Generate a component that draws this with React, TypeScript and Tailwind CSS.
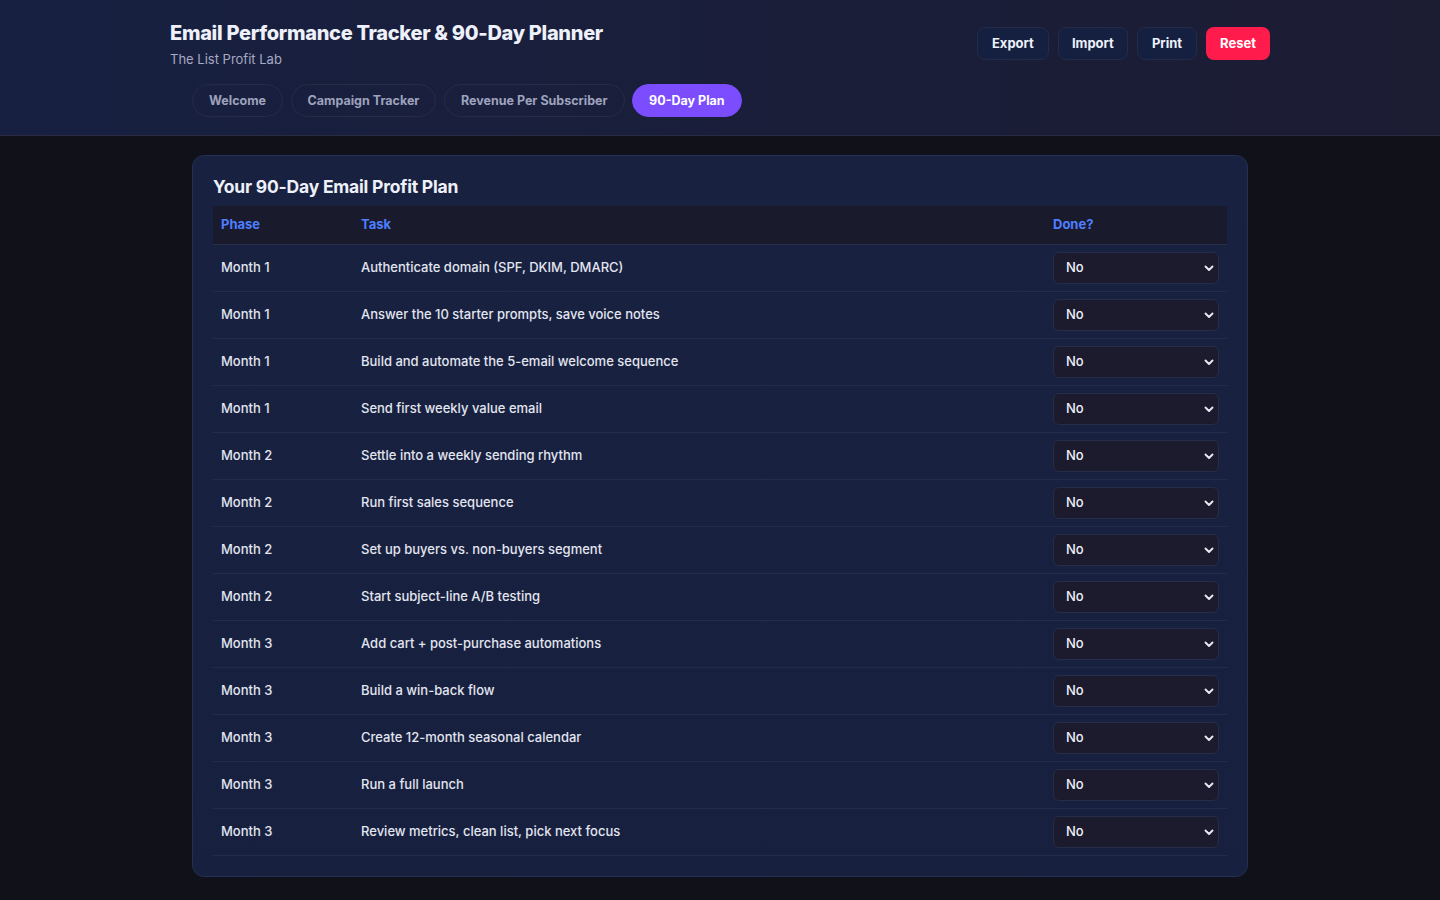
import { useState } from "react";

const tabs = ["Welcome", "Campaign Tracker", "Revenue Per Subscriber", "90-Day Plan"];

const plan = [
    { phase: "Month 1", task: "Authenticate domain (SPF, DKIM, DMARC)" },
    { phase: "Month 1", task: "Answer the 10 starter prompts, save voice notes" },
    { phase: "Month 1", task: "Build and automate the 5-email welcome sequence" },
    { phase: "Month 1", task: "Send first weekly value email" },
    { phase: "Month 2", task: "Settle into a weekly sending rhythm" },
    { phase: "Month 2", task: "Run first sales sequence" },
    { phase: "Month 2", task: "Set up buyers vs. non-buyers segment" },
    { phase: "Month 2", task: "Start subject-line A/B testing" },
    { phase: "Month 3", task: "Add cart + post-purchase automations" },
    { phase: "Month 3", task: "Build a win-back flow" },
    { phase: "Month 3", task: "Create 12-month seasonal calendar" },
    { phase: "Month 3", task: "Run a full launch" },
    { phase: "Month 3", task: "Review metrics, clean list, pick next focus" },
];

function Chevron() {
    return (
        <svg className="pointer-events-none absolute right-[5px] top-1/2 -translate-y-1/2" width="10" height="10" viewBox="0 0 10 10" fill="none">
            <path d="M1.5 3.5 L5 7 L8.5 3.5" stroke="#e8e9f3" strokeWidth="1.9" strokeLinecap="round" strokeLinejoin="round" />
        </svg>
    );
}

export default function App() {
    const [active, setActive] = useState("90-Day Plan");
    const [done, setDone] = useState<string[]>(plan.map(() => "No"));

    return (
        <div className="min-h-screen bg-[#111119] text-[#e3e5f0]" style={{ fontFamily: "Inter, 'Noto Sans', sans-serif" }}>
            {/* Header */}
            <header className="border-b border-[#2a2b42] bg-gradient-to-r from-[#172041] to-[#1c1c33] pb-[18px] pt-[19px]">
                <div className="mx-auto flex w-[1100px] items-start justify-between">
                    <div>
                        <h1 className="text-[20px] font-extrabold leading-7 tracking-[-0.3px] text-[#eef0fa]">
                            Email Performance Tracker &amp; 90-Day Planner
                        </h1>
                        <p className="mt-[4px] text-[13px] leading-4 text-[#a7aac2]">The List Profit Lab</p>
                    </div>
                    <div className="mt-[8px] flex gap-[9px]">
                        <button className="h-[33px] rounded-lg border border-[#222b48] bg-[#152040] px-[14px] text-[13px] font-bold text-[#eef0fa]">Export</button>
                        <button className="h-[33px] rounded-lg border border-[#222b48] bg-[#152040] px-[13px] text-[13px] font-bold text-[#eef0fa]">Import</button>
                        <button className="h-[33px] rounded-lg border border-[#222b48] bg-[#152040] px-[14px] text-[13px] font-bold text-[#eef0fa]">Print</button>
                        <button className="h-[33px] rounded-lg bg-[#ff1c4d] px-[14px] text-[13px] font-bold text-white">Reset</button>
                    </div>
                </div>
                <nav className="mx-auto mt-[17px] flex w-[1056px] gap-[7.5px]">
                    {tabs.map((t) => (
                        <button
                            key={t}
                            onClick={() => setActive(t)}
                            className={
                                active === t
                                    ? "h-[33px] rounded-full border border-[#7b4dff] bg-[#7b4dff] px-[16px] pt-[1px] text-[12.5px] font-bold text-white"
                                    : "h-[33px] rounded-full border border-[#262b46] px-[16px] pt-[1px] text-[12.5px] font-bold text-[#9ea2bd]"
                            }
                        >
                            {t}
                        </button>
                    ))}
                </nav>
            </header>

            {/* Plan card */}
            <main className="mx-auto mt-[19px] w-[1056px] pb-6">
                <section className="rounded-xl border border-[#243053] bg-gradient-to-b from-[#182240] to-[#17213f] px-[20px] pb-[20px] pt-[17px]">
                    <h2 className="mb-[5px] text-[17.5px] font-bold leading-7 tracking-[-0.2px] text-[#eef0fa]">Your 90-Day Email Profit Plan</h2>
                    <table className="w-full border-collapse text-left">
                        <thead>
                            <tr className="border-b border-[#252d4a] bg-[#1a1a2d]">
                                <th className="w-[140px] px-[8px] pb-[11px] pt-[9px] text-[13px] font-bold leading-[18px] text-[#4d7fff]">Phase</th>
                                <th className="px-[8px] pb-[11px] pt-[9px] text-[13px] font-bold leading-[18px] text-[#4d7fff]">Task</th>
                                <th className="w-[182px] px-[8px] pb-[11px] pt-[9px] text-[13px] font-bold leading-[18px] text-[#4d7fff]">Done?</th>
                            </tr>
                        </thead>
                        <tbody>
                            {plan.map((row, i) => (
                                <tr key={i} className="border-b border-[#232c49]">
                                    <td className="px-[8px] text-[13px] font-medium text-[#e3e5f0]">{row.phase}</td>
                                    <td className="px-[8px] text-[13px] font-medium text-[#e3e5f0]">{row.task}</td>
                                    <td className="px-[8px] py-[7px]">
                                        <div className="relative">
                                            <select
                                                value={done[i]}
                                                onChange={(e) => setDone(done.map((d, j) => (j === i ? e.target.value : d)))}
                                                className="h-[32px] w-full appearance-none rounded-md border border-[#282d47] bg-[#1b1b2d] pl-[12px] text-[13px] font-medium text-[#eef0fa] outline-none"
                                            >
                                                <option>No</option>
                                                <option>Yes</option>
                                            </select>
                                            <Chevron />
                                        </div>
                                    </td>
                                </tr>
                            ))}
                        </tbody>
                    </table>
                </section>
            </main>
        </div>
    );
}
